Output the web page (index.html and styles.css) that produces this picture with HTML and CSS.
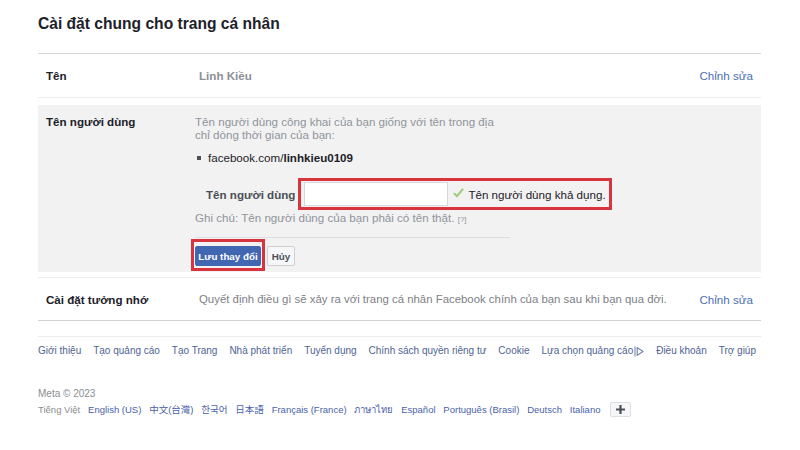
FILE: index.html
```html
<!DOCTYPE html>
<html lang="vi">
<head>
  <meta charset="UTF-8" />
  <meta name="viewport" content="width=device-width, initial-scale=1.0" />
  <title>Cài đặt chung cho trang cá nhân</title>
  <link rel="stylesheet" href="styles.css">
</head>
<body>

  <div class="page">
    <h1 class="title">Cài đặt chung cho trang cá nhân</h1>

    <div class="settings">
      <!-- Tên -->
      <div class="row">
        <div class="row-label">Tên</div>
        <div class="row-value strong-gray">Linh Kiều</div>
        <a class="row-edit" href="#">Chỉnh sửa</a>
      </div>

      <!-- Tên người dùng (đang mở) -->
      <div class="edit-block">
        <div class="edit-label">Tên người dùng</div>
        <div class="edit-body">
          <p class="hint">Tên người dùng công khai của bạn giống với tên trong địa<br>chỉ dòng thời gian của bạn:</p>
          <ul class="url-list">
            <li>facebook.com/<b>linhkieu0109</b></li>
          </ul>

          <div class="field-row">
            <label class="field-label" for="username">Tên người dùng</label>
            <div class="mark mark-field">
              <input class="field-input" id="username" type="text" value="">
              <svg class="check" width="11" height="10" viewBox="0 0 11 10">
                <path d="M1.5 5.8 L4 8.2 L9.6 1.4" fill="none" stroke="#9ccb7a" stroke-width="2" stroke-linecap="round" stroke-linejoin="round"/>
              </svg>
              <span class="field-ok">Tên người dùng khả dụng.</span>
            </div>
          </div>

          <p class="note">Ghi chú: Tên người dùng của bạn phải có tên thật. <span class="note-help">[?]</span></p>
          <div class="divider"></div>

          <div class="actions">
            <div class="mark mark-btn">
              <button class="btn btn-primary" type="button">Lưu thay đổi</button>
            </div>
            <button class="btn btn-plain" type="button">Hủy</button>
          </div>
        </div>
      </div>

      <!-- Cài đặt tưởng nhớ -->
      <div class="row row-last">
        <div class="row-label">Cài đặt tưởng nhớ</div>
        <div class="row-value">Quyết định điều gì sẽ xảy ra với trang cá nhân Facebook chính của bạn sau khi bạn qua đời.</div>
        <a class="row-edit" href="#">Chỉnh sửa</a>
      </div>
    </div>

    <div class="footer">
      <nav class="footer-links">
        <a href="#">Giới thiệu</a>
        <a href="#">Tạo quảng cáo</a>
        <a href="#">Tạo Trang</a>
        <a href="#">Nhà phát triển</a>
        <a href="#">Tuyển dụng</a>
        <a href="#">Chính sách quyền riêng tư</a>
        <a href="#">Cookie</a>
        <a href="#" class="adchoices">Lựa chọn quảng cáo<svg width="10" height="11" viewBox="0 0 10 11"><path d="M1 0.5 V10.5" stroke="#6d7fa8" stroke-width="1"/><path d="M3.2 1.6 L9 5.5 L3.2 9.4 Z" fill="none" stroke="#6d7fa8" stroke-width="1.1" stroke-linejoin="round"/></svg></a>
        <a href="#">Điều khoản</a>
        <a href="#">Trợ giúp</a>
      </nav>

      <div class="copyright">Meta © 2023</div>
      <div class="langs">
        <span class="lang-current">Tiếng Việt</span>
        <a href="#">English (US)</a>
        <a href="#" lang="zh-TW">中文(台灣)</a>
        <a href="#" lang="ko">한국어</a>
        <a href="#" lang="ja">日本語</a>
        <a href="#">Français (France)</a>
        <a href="#" lang="th">ภาษาไทย</a>
        <a href="#">Español</a>
        <a href="#">Português (Brasil)</a>
        <a href="#">Deutsch</a>
        <a href="#">Italiano</a>
        <button class="lang-more" type="button">
          <svg width="11" height="11" viewBox="0 0 11 11"><path d="M5.5 1 V10 M1 5.5 H10" stroke="#4b4f56" stroke-width="2.2"/></svg>
        </button>
      </div>
    </div>
  </div>

</body>
</html>
```

FILE: styles.css
```css
* { margin: 0; padding: 0; box-sizing: border-box; }
html, body {
  width: 100%;
  height: 100%;
  overflow: hidden;
  background: #fff;
  font-family: "Liberation Sans", Arial, "Noto Sans CJK TC", sans-serif;
  color: #1d2129;
}

a { text-decoration: none; color: #365899; }

.page {
  width: 800px;
  padding: 0 39px 0 38px;
}

.title {
  font-size: 15.6px;
  font-weight: bold;
  line-height: 20px;
  padding-top: 14px;
  margin-bottom: 19px;
  color: #1d2129;
}

/* danh sách cài đặt */
.settings { border-top: 1px solid #d3d5d8; }

.row {
  display: flex;
  align-items: center;
  height: 44px;
  padding: 0 8px;
  border-bottom: 1px solid #eceef0;
  font-size: 11.6px;
}

.row-label {
  width: 153px;
  flex-shrink: 0;
  font-weight: bold;
}

.row-value { flex: 1; color: #7d8086; font-size: 11.4px; }
.strong-gray { font-weight: bold; color: #8d9096; font-size: 11.6px; }

.row-edit { color: #4a70b5; font-size: 11.6px; }

.row-last {
  margin-top: 5px;
  border-top: 1px solid #eceef0;
  border-bottom: 1px solid #cfd1d5;
}

/* khối đang chỉnh sửa */
.edit-block {
  display: flex;
  margin-top: 7px;
  height: 167px;
  padding: 10px 8px 3px;
  background: #f2f2f2;
  font-size: 11.6px;
}

.edit-label {
  width: 149px;
  flex-shrink: 0;
  font-weight: bold;
  line-height: 13px;
}

.edit-body { flex: 1; }

.hint { color: #90949c; line-height: 13px; }

.url-list {
  list-style: none;
  margin-top: 10px;
  line-height: 14px;
}
.url-list li {
  display: flex;
  align-items: center;
  padding-left: 2px;
}
.url-list li::before {
  content: "";
  width: 4px;
  height: 4px;
  background: #4b4f56;
  margin-right: 7px;
}

.field-row {
  display: flex;
  align-items: center;
  margin-top: 13px;
  padding-left: 11px;
}

.field-label {
  font-weight: bold;
  color: #4b4f56;
  margin-right: 3px;
}

.mark { border: 3px solid #d8343d; }

.mark-field {
  display: flex;
  align-items: center;
  padding: 1px 3px;
}

.field-input {
  width: 144px;
  height: 24px;
  border: 1px solid #d5d7db;
  background: #fff;
  font: inherit;
  padding: 0 4px;
  outline: none;
}

.check { margin: 0 4px 3px 5px; }

.field-ok { color: #1d2129; font-size: 11.6px; }

.note {
  margin-top: 1px;
  line-height: 14px;
  color: #90949c;
}
.note-help { font-size: 8px; }

.divider {
  width: 315px;
  height: 1px;
  margin-top: 10px;
  background: #dcdee1;
}

.actions {
  display: flex;
  align-items: flex-start;
  margin-top: 1px;
  margin-left: -4px;
}

.mark-btn { padding: 4px 1px 2px; }

.btn {
  height: 20px;
  padding: 0;
  font-family: inherit;
  font-size: 9.8px;
  font-weight: bold;
  white-space: nowrap;
  border-radius: 2px;
}

.btn-primary {
  width: 66px;
  background: #4267b2;
  border: 1px solid #4267b2;
  color: #fff;
}

.btn-plain {
  width: 28px;
  margin: 7px 0 0 2px;
  background: #f6f7f9;
  border: 1px solid #ced0d4;
  color: #4b4f56;
}

/* chân trang */
.footer {
  margin-top: 15px;
  border-top: 1px solid #e9ebee;
  padding-top: 8px;
  font-size: 10px;
}

.footer-links {
  display: flex;
  justify-content: space-between;
  line-height: 12px;
  padding-right: 5px;
}
.footer-links a { color: #4f6494; }

.adchoices { display: flex; align-items: center; }
.adchoices svg { margin-left: 1px; }

.copyright {
  margin-top: 31px;
  line-height: 12px;
  color: #8a8d91;
}

.langs {
  display: flex;
  align-items: center;
  gap: 7.8px;
  margin-top: 1px;
  height: 16px;
  font-size: 9.5px;
}
.langs a { color: #4a62a8; }
.lang-current { color: #8a8d91; }

.lang-more {
  width: 21px;
  height: 15px;
  margin-left: 2px;
  display: flex;
  align-items: center;
  justify-content: center;
  background: #f5f6f7;
  border: 1px solid #dddfe2;
  border-radius: 2px;
}
```
